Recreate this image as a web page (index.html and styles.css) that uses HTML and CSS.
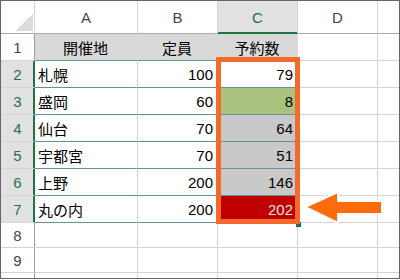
FILE: index.html
```html
<!DOCTYPE html>
<html lang="ja">
<head>
    <meta charset="UTF-8">
    <meta name="viewport" content="width=device-width, initial-scale=1.0">
    <title>予約数</title>
    <link rel="stylesheet" href="styles.css">
</head>
<body>
    <div class="sheet">
        <!-- column headers -->
        <div class="corner"></div>
        <div class="col-hd">A</div>
        <div class="col-hd">B</div>
        <div class="col-hd active">C</div>
        <div class="col-hd">D</div>
        <div class="col-hd last"></div>

        <!-- row 1: table heading -->
        <div class="row-hd">1</div>
        <div class="cell head first">開催地</div>
        <div class="cell head">定員</div>
        <div class="cell head">予約数</div>
        <div class="cell"></div>
        <div class="cell last"></div>

        <div class="row-hd active">2</div>
        <div class="cell data">札幌</div>
        <div class="cell data num">100</div>
        <div class="cell data num">79</div>
        <div class="cell"></div>
        <div class="cell last"></div>

        <div class="row-hd active">3</div>
        <div class="cell data">盛岡</div>
        <div class="cell data num">60</div>
        <div class="cell data num good">8</div>
        <div class="cell"></div>
        <div class="cell last"></div>

        <div class="row-hd active">4</div>
        <div class="cell data">仙台</div>
        <div class="cell data num">70</div>
        <div class="cell data num mid">64</div>
        <div class="cell"></div>
        <div class="cell last"></div>

        <div class="row-hd active">5</div>
        <div class="cell data">宇都宮</div>
        <div class="cell data num">70</div>
        <div class="cell data num mid">51</div>
        <div class="cell"></div>
        <div class="cell last"></div>

        <div class="row-hd active">6</div>
        <div class="cell data">上野</div>
        <div class="cell data num">200</div>
        <div class="cell data num mid">146</div>
        <div class="cell"></div>
        <div class="cell last"></div>

        <div class="row-hd active">7</div>
        <div class="cell data">丸の内</div>
        <div class="cell data num">200</div>
        <div class="cell data num over">202</div>
        <div class="cell"></div>
        <div class="cell last"></div>

        <div class="row-hd">8</div>
        <div class="cell"></div>
        <div class="cell"></div>
        <div class="cell"></div>
        <div class="cell"></div>
        <div class="cell last"></div>

        <div class="row-hd">9</div>
        <div class="cell"></div>
        <div class="cell"></div>
        <div class="cell"></div>
        <div class="cell"></div>
        <div class="cell last"></div>

        <div class="row-hd">10</div>
        <div class="cell"></div>
        <div class="cell"></div>
        <div class="cell"></div>
        <div class="cell"></div>
        <div class="cell last"></div>

        <!-- highlight around C2:C7 and the pointer -->
        <div class="handle"></div>
        <div class="frame"></div>
        <svg class="arrow" width="90" height="40" viewBox="0 0 90 40">
            <polygon points="5,19 38,4 38,13 82,13 82,26 38,26 38,35" fill="#ff6a0a" stroke="#fff" stroke-width="2" stroke-linejoin="miter"/>
        </svg>
    </div>
</body>
</html>
```

FILE: styles.css
```css
body {
    margin: 0;
    background: #fff;
    font-family: "Liberation Sans", "Noto Sans CJK JP", sans-serif;
    font-size: 15px;
}

.sheet {
    position: relative;
    width: 400px;
    height: 279px;
    box-sizing: border-box;
    border: 1px solid #666;
    overflow: hidden;
    display: grid;
    grid-template-columns: 34px 103px 80px 80px 80px 1fr;
    grid-template-rows: 33px repeat(7, 27px) 25px 25px 25px;
}

.sheet > div {
    box-sizing: border-box;
    display: flex;
    align-items: center;
    border-right: 1px solid #d4d4d4;
    border-bottom: 1px solid #d4d4d4;
}

.sheet > .last {
    border-right: none;
}

/* headers */
.corner {
    border-bottom-color: #ababab !important;
    background: linear-gradient(to bottom right, transparent 50%, #dcdcdc 50%) no-repeat right 1px bottom 2px / 17px 17px;
}

.col-hd {
    justify-content: center;
    color: #444;
    border-bottom-color: #ababab !important;
    padding-top: 1px;
}

.col-hd.active {
    background: #e1e1e1;
    color: #217346;
    border-bottom-color: #217346 !important;
    box-shadow: inset 0 -1px 0 #217346;
}

.row-hd {
    justify-content: center;
    color: #444;
    border-right-color: #9f9f9f !important;
}

.row-hd.active {
    background: #e1e1e1;
    color: #217346;
    border-right-color: #217346 !important;
    box-shadow: inset -1px 0 0 #217346;
}

/* cells */
.cell {
    padding: 0 4px 0 3px;
    color: #000;
    white-space: nowrap;
}

.cell.head {
    justify-content: center;
    background: #d9d9d9;
    border-right-color: #d9d9d9;
    border-bottom-color: #6a8f9b;
}

.cell.data {
    border-bottom-color: #6a8f9b;
}

.cell.num {
    justify-content: flex-end;
}

.cell.good {
    background: #a9c27e;
}

.cell.mid {
    background: #c9c9c9;
}

.cell.over {
    background: #c00000;
    color: #e4e4e4;
}

/* overlays */
.frame {
    position: absolute;
    left: 215px;
    top: 56px;
    width: 84px;
    height: 167px;
    box-sizing: border-box;
    border: 5px solid #f26b2b !important;
}

.handle {
    position: absolute;
    left: 295px;
    top: 221px;
    width: 5px;
    height: 5px;
    background: #217346;
    border: none !important;
}

.arrow {
    position: absolute;
    left: 299px;
    top: 187px;
}
```
